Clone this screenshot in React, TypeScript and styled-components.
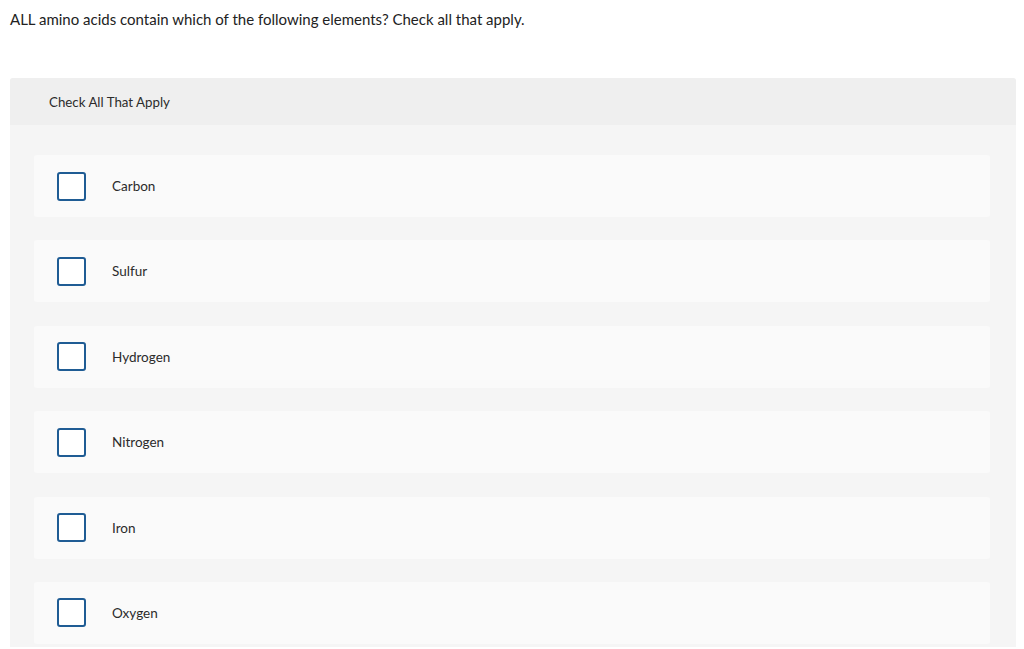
import React from "react";
import styled, { createGlobalStyle } from "styled-components";

const GlobalStyle = createGlobalStyle`
  html, body {
    margin: 0;
    padding: 0;
    background: #ffffff;
  }
  body {
    font-family: "Lato", "Open Sans", "Liberation Sans", sans-serif;
    color: #333333;
  }
`;

const Page = styled.div`
  padding: 9px 8px 0 10px;
`;

const Question = styled.p`
  margin: 0;
  font-size: 15px;
  line-height: 20px;
  color: #222222;
`;

const Panel = styled.section`
  margin-top: 49px;
  background: #f5f5f5;
  border-radius: 3px 3px 0 0;
  overflow: hidden;
`;

const PanelHeader = styled.div`
  height: 47px;
  background: #efefef;
  display: flex;
  align-items: center;
  padding-left: 39px;
  font-size: 13.3px;
  color: #2b2b2b;
`;

const OptionList = styled.div`
  display: flex;
  flex-direction: column;
  gap: 23.4px;
  padding: 30px 26px 3px 24px;
`;

const OptionRow = styled.label`
  height: 62px;
  background: #fafafa;
  border-radius: 3px;
  display: flex;
  align-items: center;
  padding-left: 23px;
  gap: 26px;
  cursor: pointer;
`;

const Box = styled.span`
  width: 29px;
  height: 29px;
  box-sizing: border-box;
  border: 2px solid #1f5c94;
  border-radius: 3px;
  background: #ffffff;
  flex: none;
`;

const OptionText = styled.span`
  font-size: 13.5px;
  color: #2b2b2b;
`;

const options = ["Carbon", "Sulfur", "Hydrogen", "Nitrogen", "Iron", "Oxygen"];

export default function App() {
  return (
    <>
      <GlobalStyle />
      <Page>
        <Question>
          ALL amino acids contain which of the following elements? Check all that apply.
        </Question>
        <Panel>
          <PanelHeader>Check All That Apply</PanelHeader>
          <OptionList>
            {options.map((o) => (
              <OptionRow key={o}>
                <Box />
                <OptionText>{o}</OptionText>
              </OptionRow>
            ))}
          </OptionList>
        </Panel>
      </Page>
    </>
  );
}
